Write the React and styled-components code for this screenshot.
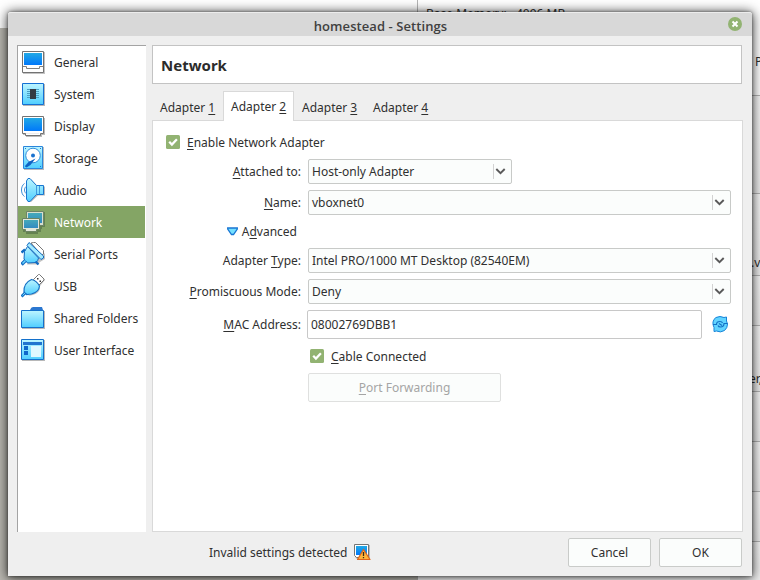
import React from "react";
import styled, { createGlobalStyle, css } from "styled-components";

const GlobalStyle = createGlobalStyle`
  * { box-sizing: border-box; }
  body { margin: 0; overflow: hidden; }
`;

const Desktop = styled.div`
  position: relative;
  width: 760px;
  height: 580px;
  padding: 12px 8px 4px;
  overflow: hidden;
  background: #bab8b1;
  color: #303030;
  font: 12px/16px "Noto Sans", sans-serif;
  white-space: nowrap;
`;

const BackTop = styled.div`
  position: absolute;
  inset: 0 0 auto 0;
  height: 28px;
  background: #fff;
`;

const BackDetails = styled.div`
  position: absolute;
  top: 0;
  left: 417px;
  right: 0;
  bottom: 0;
  border-left: 1px solid #b5b5b5;
  background: #fff;
`;

const BackCard = styled.div`
  position: absolute;
  right: 0;
  top: ${(p) => p.$top}px;
  width: 30px;
  height: ${(p) => p.$height}px;
  border-top: 1px solid #b4b4b4;
  background: linear-gradient(#f7f7f7, #ededed);
`;

const BackText = styled.span`
  position: absolute;
  left: ${(p) => p.$left}px;
  top: ${(p) => p.$top}px;
`;

const Dialog = styled.div`
  position: relative;
  display: flex;
  flex-direction: column;
  width: 744px;
  height: 564px;
  border-radius: 3px 3px 0 0;
  background: #efefef;
  box-shadow: 0 1px 12px 1px rgba(0, 0, 0, 0.75), 0 0 3px rgba(0, 0, 0, 0.5);
`;

const TitleBar = styled.header`
  display: flex;
  align-items: center;
  justify-content: center;
  height: 24px;
  padding: 2px 10px 0 25px;
  border-top: 1px solid #ececec;
  border-radius: 3px 3px 0 0;
  background: #d8d8d8;
`;

const Title = styled.h1`
  flex: 1;
  margin: 0;
  text-align: center;
  font: 600 13px/18px "Open Sans", "Noto Sans", sans-serif;
  letter-spacing: 0.08px;
  color: #404040;
`;

const CloseButton = styled.button`
  width: 14px;
  height: 14px;
  margin-top: -3px;
  padding: 0;
  border: 0;
  background: none;
  svg { display: block; }
`;

const Body = styled.div`
  display: flex;
  height: 496px;
  padding: 9px 9px 0;
  gap: 6px;
`;

const Sidebar = styled.nav`
  width: 129px;
  height: 487px;
  border-top: 1px solid #a3a3a3;
  border-left: 1px solid #a3a3a3;
  background: #fff;
`;

const NavItem = styled.div`
  display: flex;
  align-items: center;
  gap: 9px;
  width: 127px;
  height: 32px;
  padding-left: 3px;
  line-height: 18px;
  ${(p) =>
    p.$selected &&
    css`
      background: #84a565;
      color: #fff;
    `}
  svg { flex: none; }
`;

const NavText = styled.span`
  padding-top: 2px;
`;

const Main = styled.main`
  display: flex;
  flex-direction: column;
  width: 591px;
`;

const PageHeading = styled.h2`
  width: 590px;
  height: 39px;
  margin: 0;
  padding: 0 8px;
  border: 1px solid #c3c3c3;
  background: #fff;
  font: bold 15px/39px "Noto Sans", sans-serif;
  color: #2c2c2c;
`;

const Tabs = styled.div`
  display: flex;
  align-items: flex-end;
  height: 37px;
  z-index: 1;
`;

const Tab = styled.div`
  width: 71px;
  height: 28px;
  padding: 7px 0 0 8px;
  ${(p) =>
    p.$active &&
    css`
      height: 30px;
      padding: 7px 0 0 7px;
      border: 1px solid #d9d9d9;
      border-bottom: 0;
      background: #fff;
    `}
`;

const TabPage = styled.section`
  width: 591px;
  height: 412px;
  margin-top: -1px;
  padding: 10px 11px 0 13px;
  border: 1px solid #d9d9d9;
  background: #fff;
`;

const CheckRow = styled.div`
  display: flex;
  align-items: center;
  gap: 7px;
  height: 22px;
  padding-left: ${(p) => p.$indent || 0}px;
  svg { flex: none; }
`;

const CheckLabel = styled.span`
  padding-top: 2px;
`;

const Form = styled.div`
  display: grid;
  grid-template-columns: 135px 423px;
  grid-template-rows: 25px 25px 21px 25px 25px 29px 22px 29px;
  grid-row-gap: 6px;
  column-gap: 7px;
  margin-top: 6px;
  align-items: center;
`;

const Label = styled.label`
  text-align: right;
`;

const Mnemonic = styled.span`
  text-decoration: underline;
  text-decoration-thickness: 1px;
  text-underline-offset: 2px;
  text-decoration-skip-ink: none;
`;

const ComboBox = styled.div`
  display: flex;
  align-items: center;
  justify-content: space-between;
  width: ${(p) => p.$width}px;
  height: 25px;
  padding: 0 5px 0 3px;
  border: 1px solid #c8cac8;
  border-radius: 2px;
  background: #fbfdfc;
`;

const Arrow = styled.span`
  display: flex;
  align-items: center;
  justify-content: flex-end;
  width: 13px;
  height: 15px;
  border-left: 1px solid #d2d2d2;
`;

const Expander = styled.div`
  display: flex;
  align-items: center;
  justify-content: flex-end;
  gap: 4px;
  height: 21px;
  padding-right: 4px;
`;

const MacRow = styled.div`
  display: flex;
  align-items: center;
  gap: 10px;
  margin-left: -1px;
`;

const TextField = styled.div`
  width: 395px;
  height: 29px;
  padding: 6px 3px 4px;
  border: 1px solid #c8c8c8;
  border-radius: 2px;
  background: #fff;
`;

const PushButton = styled.button`
  width: ${(p) => p.$width}px;
  height: 29px;
  padding: 0;
  border: 1px solid ${(p) => (p.disabled ? "#dfe0df" : "#c9cbc9")};
  border-radius: 2px;
  background: #fbfdfc;
  color: ${(p) => (p.disabled ? "#a5a5a5" : "#303030")};
  font: inherit;
`;

const Footer = styled.footer`
  display: flex;
  align-items: flex-start;
  gap: 8px;
  padding: 6px 10px 0 201px;
`;

const Status = styled.div`
  display: flex;
  align-items: center;
  gap: 7px;
  height: 29px;
  margin-right: auto;
`;

const navArt = {
  General: (
    <>
      <path d="M2 2h22v22H2z" fill="#c3c3c3" />
      <path d="M1.5 1.5h21v21h-21z" fill="#fff" stroke="#737373" />
      <path d="M3 3h18v12H3z" fill="url(#screen)" />
      <path d="M2 16.5h3.5v2h13v-2H22" fill="none" stroke="#808080" />
    </>
  ),
  System: (
    <>
      <path d="M2 2h22v22H2z" fill="#b5b5b5" />
      <path d="M1.5 1.5h21v21h-21z" fill="url(#glass)" stroke="#1470d4" />
      <path d="M6 7.5h12M6 9.5h12M6 11.5h12M6 13.5h12M6 15.5h12" stroke="#4b9fc4" />
      <path d="M9 7h6v10H9z" fill="#343a43" />
    </>
  ),
  Display: (
    <>
      <path d="M2 4h22v17h-3v2H5v-2H2z" fill="#bbb" />
      <path d="M1.5 2.5h21v17h-3v2h-15v-2h-3z" fill="#fff" stroke="#737373" />
      <path d="M3 4h18v13H3z" fill="url(#screen)" />
      <path d="M5 19.5h13" stroke="#eee" />
    </>
  ),
  Storage: (
    <>
      <path d="M3 1h20v23H3z" fill="#bbb" />
      <path d="M2.5.5h19v22h-19z" fill="url(#glass)" stroke="#2b86dc" />
      <circle cx="12" cy="9.5" r="7.3" fill="#fff" stroke="#2f8edb" />
      <circle cx="12" cy="9.5" r="2" fill="#1972cf" />
      <path d="m14.5 12.5-7 3.5-3.5 4 1.5 1.5 4-2.5z" fill="#0f62c4" />
      <path d="M4 2h1v1H4zM19 2h1v1h-1zM4 20h1v1H4zM19 20h1v1h-1z" fill="#1b79d0" />
    </>
  ),
  Audio: (
    <>
      <path d="M7 4 10 1.5 17 8.5h7v9h-7L10 24H8z" fill="#bbb" />
      <path d="M5.5 3 7 .5h2l6.5 7h7v9h-7l-6.5 7H7L5.5 21z" fill="url(#glass)" stroke="#1976d0" />
      <path d="M15.5 8v8M18.5 8v8" stroke="#3f97de" />
      <path d="M3.5 5.5C-.5 8-.5 16 3.5 18.5M5 8.5c-2 2-2 5 0 7" fill="none" stroke="#388ed5" />
    </>
  ),
  Network: (
    <>
      <path d="M7 2h17v15h-3v2H7zM2 10h18v12h-3v2H5v-2H2z" fill="#648251" />
      <path d="M5.5 1.5h17v14h-17z" fill="#d7dfcf" stroke="#6d8567" />
      <path d="M7 3h14v10H7z" fill="url(#network)" />
      <path d="M1.5 8.5h17v11h-3v2h-11v-2h-3z" fill="#e2e7d9" stroke="#6b8463" />
      <path d="M3 10h14v8H3z" fill="url(#network)" />
    </>
  ),
  "Serial Ports": (
    <>
      <path d="m14 2 10 10v5l-5 3-3 2.5H6z" fill="#c3c3c3" />
      <path d="m10 1 2.5-.5h2l8 8v3.5l-2 1z" fill="#fff" stroke="#777" />
      <path d="m6.5 4.5-3 5-.5 7.5 3.5 4 8.5-.5q2-1.500 2.500-4.500z" fill="url(#glass)" stroke="#126bc1" />
      <path d="M8 .5 6 3.500 20 17.500l2.500-1.500v-2z" fill="#a5ebff" stroke="#126bc1" />
      <path d="M.5 10.500 4 7.500M14.500 19.500l3 3" stroke="#126bc1" strokeWidth="2.400" />
      <path d="m.500 22.500 4-4" stroke="#126bc1" strokeWidth="3.500" />
      <path d="m1.500 21.500 3-3" stroke="#69d6ff" strokeWidth="1.500" />
    </>
  ),
  USB: (
    <>
      <path d="m15 4 4-3 5 5-5 6zM19 13q0 6-7 8l-5 1z" fill="#c3c3c3" />
      <path d="m12.500 5.500 5-5h1l4.500 4.500v1l-5 5z" fill="#fff" stroke="#777" />
      <path d="M16 4h1.500v1.500H16zM18.500 6.500H20V8h-1.500z" fill="#333" />
      <path d="M10.500 5.500q5 1 8 6.500-.500 6-8 8l-5 .500L3 18q-.500-9 7.500-12.500z" fill="url(#glass)" stroke="#1470c4" strokeWidth="1.200" />
      <path d="m.500 22.500 4-4" stroke="#1470c4" strokeWidth="3" />
      <path d="m1.500 21.500 3-3" stroke="#69d6ff" strokeWidth="1" />
    </>
  ),
  "Shared Folders": (
    <>
      <path d="M1 5h23v18H1z" fill="#b8b8b8" />
      <path d="M9 4q1-3 3-3h9l1 3v4H9z" fill="#2b77d0" />
      <path d="M.5 4.5h22v17H.5z" fill="url(#glass)" stroke="#1470cb" />
    </>
  ),
  "User Interface": (
    <>
      <path d="M1 2h23v21H1z" fill="#b8b8b8" />
      <path d="M.5 1.5h22v20H.5z" fill="url(#glass)" stroke="#1470cb" />
      <path d="M2 4h19v3H2z" fill="#2174cf" />
      <path d="M3 8h4v4H3zM3 13h4v4H3z" fill="#0e67cb" />
      <path d="M10 8h10v11H10z" fill="#dff8ff" />
    </>
  ),
};

function NavIcon({ name }) {
  return (
    <svg width="24" height="24" viewBox="0 0 24 24">
      <defs>
        <linearGradient id="screen" x2="0" y2="1">
          <stop stopColor="#22a9e5" />
          <stop offset="1" stopColor="#0078fa" />
        </linearGradient>
        <linearGradient id="glass" x2="0" y2="1">
          <stop stopColor="#bdf5ff" />
          <stop offset="1" stopColor="#4fceff" />
        </linearGradient>
        <linearGradient id="network" x2="0" y2="1">
          <stop stopColor="#45a9ba" />
          <stop offset="1" stopColor="#338bc1" />
        </linearGradient>
      </defs>
      {navArt[name]}
    </svg>
  );
}

const CheckIcon = () => (
  <svg width="14" height="14">
    <rect width="14" height="14" rx="1.5" fill="#92b372" />
    <path d="m3.200 6.800 2.700 2.700 5-5.200" fill="none" stroke="#fff" strokeWidth="2.300" />
  </svg>
);

const RefreshIcon = () => (
  <svg width="17" height="17" viewBox="0 0 17 17">
    <path d="M4 1.500Q8-.5 12 1.500l2.500-.500v4l1 3q0 4-3 6.500-4 2.500-8 .500l-2.500.500v-4l-1-3V6Q1.500 3 4 1.500z" fill="#62d4ff" stroke="#1683d8" />
    <path d="M1 8.500h3.500q0-3 3.500-3 2 0 2.500 1.500M15.500 7.500H12q0 3.500-3.500 3.500-2 0-2.500-1.500M7 7.500l3 2" fill="none" stroke="#1370c6" strokeWidth="1.200" />
  </svg>
);

const WarningIcon = () => (
  <svg width="17" height="17" viewBox="0 0 17 17">
    <path d="M1 1h15v14H3l-2-2z" fill="#bbb" />
    <path d="M.5.5h14v13h-12l-2-2z" fill="#fff" stroke="#757575" />
    <path d="M2 2h11v9H2z" fill="url(#screen)" />
    <path d="M9.5 5.5 16 15.5H3.5z" fill="#ffb53b" stroke="#df641b" strokeWidth="1.2" strokeLinejoin="round" />
    <path d="M9.5 8v4M9.5 13v1.3" stroke="#3b2b16" strokeWidth="1.3" />
  </svg>
);

function Combo({ width = 423, children }) {
  return (
    <ComboBox $width={width}>
      {children}
      <Arrow>
        <svg width="11" height="7">
          <path d="m1.300 1 4.200 4.200L9.700 1" fill="none" stroke="#595959" strokeWidth="1.900" />
        </svg>
      </Arrow>
    </ComboBox>
  );
}

export default function App() {
  return (
    <Desktop>
      <GlobalStyle />
      <BackTop />
      <BackDetails />
      <BackCard $top={95} $height={98} />
      <BackCard $top={193} $height={82} />
      <BackCard $top={275} $height={50} />
      <BackCard $top={325} $height={66} />
      <BackCard $top={391} $height={50} />
      <BackCard $top={441} $height={50} />
      <BackCard $top={491} $height={50} />
      <BackCard $top={541} $height={39} />
      <BackText $left={426} $top={6}>Base Memory:&nbsp;&nbsp; 4096 MB</BackText>
      <BackText $left={755} $top={54}>P</BackText>
      <BackText $left={751} $top={255}>.v</BackText>
      <BackText $left={749} $top={371}>er,</BackText>
      <Dialog>
        <TitleBar>
          <Title>homestead - Settings</Title>
          <CloseButton aria-label="Close">
            <svg width="14" height="14">
              <circle cx="7" cy="7" r="7" fill="#92b372" />
              <path d="m4.500 4.500 5 5m0-5-5 5" stroke="#fff" strokeWidth="2" />
            </svg>
          </CloseButton>
        </TitleBar>
        <Body>
          <Sidebar>
            {Object.keys(navArt).map((name) => (
              <NavItem key={name} $selected={name === "Network"}>
                <NavIcon name={name} />
                <NavText>{name}</NavText>
              </NavItem>
            ))}
          </Sidebar>
          <Main>
            <PageHeading>Network</PageHeading>
            <Tabs>
              {[1, 2, 3, 4].map((n) => (
                <Tab key={n} $active={n === 2}>
                  Adapter <Mnemonic>{n}</Mnemonic>
                </Tab>
              ))}
            </Tabs>
            <TabPage>
              <CheckRow>
                <CheckIcon />
                <CheckLabel><Mnemonic>E</Mnemonic>nable Network Adapter</CheckLabel>
              </CheckRow>
              <Form>
                <Label><Mnemonic>A</Mnemonic>ttached to:</Label>
                <Combo width={204}>Host-only Adapter</Combo>
                <Label><Mnemonic>N</Mnemonic>ame:</Label>
                <Combo>vboxnet0</Combo>
                <Expander>
                  <svg width="11" height="9">
                    <path d="M.7 1h9.600v1L6.500 7.500h-2L.7 2z" fill="#74e0ff" stroke="#1976d4" strokeWidth="1.300" />
                  </svg>
                  <span>A<Mnemonic>d</Mnemonic>vanced</span>
                </Expander>
                <span />
                <Label>Adapter <Mnemonic>T</Mnemonic>ype:</Label>
                <Combo>Intel PRO/1000 MT Desktop (82540EM)</Combo>
                <Label><Mnemonic>P</Mnemonic>romiscuous Mode:</Label>
                <Combo>Deny</Combo>
                <Label><Mnemonic>M</Mnemonic>AC Address:</Label>
                <MacRow>
                  <TextField>08002769DBB1</TextField>
                  <RefreshIcon />
                </MacRow>
                <span />
                <CheckRow $indent={2}>
                  <CheckIcon />
                  <CheckLabel><Mnemonic>C</Mnemonic>able Connected</CheckLabel>
                </CheckRow>
                <span />
                <PushButton $width={193} disabled>
                  <Mnemonic>P</Mnemonic>ort Forwarding
                </PushButton>
              </Form>
            </TabPage>
          </Main>
        </Body>
        <Footer>
          <Status>
            Invalid settings detected
            <WarningIcon />
          </Status>
          <PushButton $width={83}>Cancel</PushButton>
          <PushButton $width={83}>OK</PushButton>
        </Footer>
      </Dialog>
    </Desktop>
  );
}
